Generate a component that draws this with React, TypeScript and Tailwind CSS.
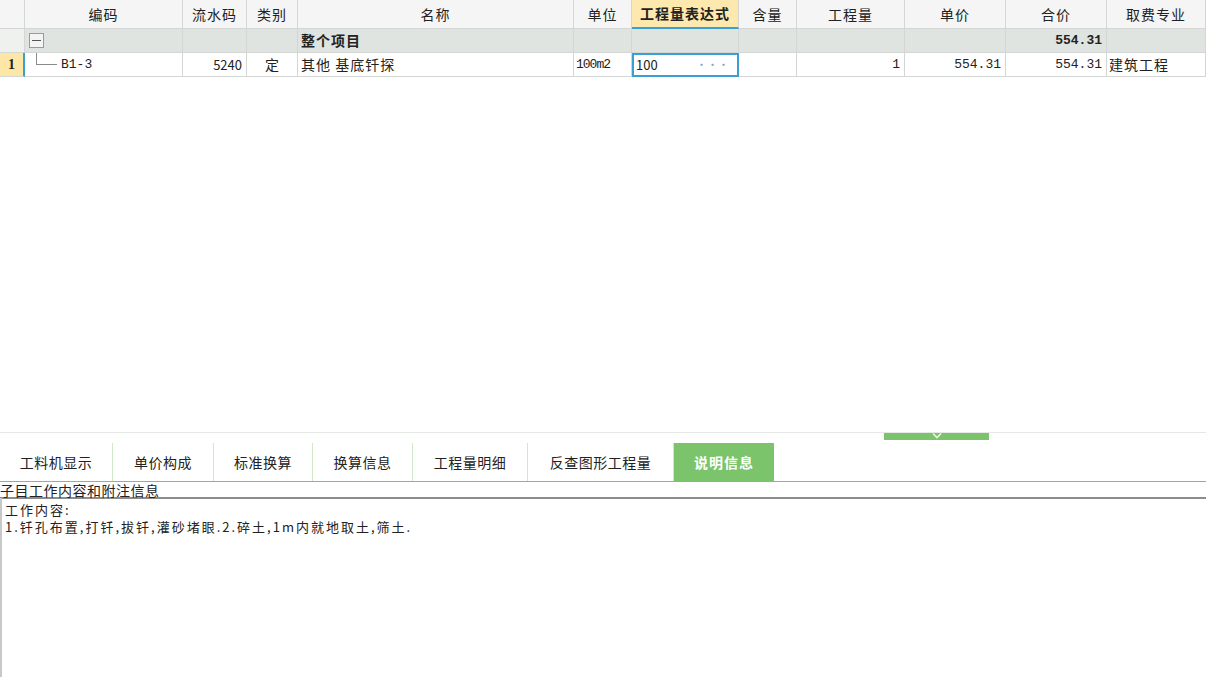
const cols = "grid grid-cols-[25px_158px_64px_51px_276px_58px_107px_58px_108px_101px_101px_99px]";
const cjk = "font-['Noto_Sans_CJK_SC',sans-serif]";
const mono = "font-['Liberation_Mono','Noto_Sans_CJK_SC',monospace]";
const cell = "border-r border-b border-[#d3d6d4] flex items-center overflow-hidden whitespace-nowrap";

const headers = ["编码", "流水码", "类别", "名称", "单位", "工程量表达式", "含量", "工程量", "单价", "合价", "取费专业"];

const tabs = ["工料机显示", "单价构成", "标准换算", "换算信息", "工程量明细", "反查图形工程量", "说明信息"];
const tabWidths = ["w-[113px]", "w-[101px]", "w-[99px]", "w-[100px]", "w-[115px]", "w-[146px]", "w-[100px]"];

const App = () => {
  return (
    <div className={`w-[1206px] h-[677px] bg-white flex flex-col overflow-hidden text-[#222] ${cjk}`}>
      {/* grid */}
      <div className="h-[432px] shrink-0">
        <div className={`${cols} h-[29px] bg-[#f4f5f4] text-[14px] tracking-[1px]`}>
          <div className={cell} />
          {headers.map((h, i) =>
            i === 5 ? (
              <div
                key={h}
                className="border-r border-[#d3d6d4] border-b-2 border-b-[#3a9fd3] bg-[#fde9ae] flex items-center justify-center font-bold"
              >
                {h}
              </div>
            ) : (
              <div key={h} className={`${cell} justify-center`}>
                {h}
              </div>
            )
          )}
        </div>

        <div className={`${cols} h-[24px] bg-[#dfe4e0] text-[14px]`}>
          <div className={`${cell} bg-[#eff1ef]`} />
          <div className={`${cell} pl-[4px]`}>
            <span className="w-[15px] h-[15px] border border-[#9a9a9a] bg-[#f4f4f4] flex items-center justify-center">
              <span className="w-[9px] h-[1px] bg-[#555]" />
            </span>
          </div>
          <div className={cell} />
          <div className={cell} />
          <div className={`${cell} pl-[3px] font-bold tracking-[1px]`}>整个项目</div>
          <div className={cell} />
          <div className={cell} />
          <div className={cell} />
          <div className={cell} />
          <div className={cell} />
          <div className={`${cell} justify-end pr-[4px] font-bold ${mono} text-[13px]`}>554.31</div>
          <div className={cell} />
        </div>

        <div className={`${cols} h-[23px] text-[14px]`}>
          <div className="border-b border-[#d3d6d4] border-r-2 border-r-[#3a9fd3] bg-[#fde7a6] flex items-center justify-center font-bold font-['Liberation_Serif',serif] text-[14px]">
            1
          </div>
          <div className={`${cell} relative`}>
            <span className="absolute left-[11px] top-[-6px] w-[1px] h-[17px] bg-[#8a8a8a]" />
            <span className="absolute left-[11px] top-[11px] w-[21px] h-[1px] bg-[#8a8a8a]" />
            <span className={`pl-[36px] ${mono} text-[13px]`}>B1-3</span>
          </div>
          <div className={`${cell} justify-end pr-[4px] text-[13px]`}>5240</div>
          <div className={`${cell} justify-center`}>定</div>
          <div className={`${cell} pl-[3px] tracking-[1px]`}>其他 基底钎探</div>
          <div className={`${cell} pl-[2px] ${mono} text-[13px] tracking-[-1px]`}>100m2</div>
          <div className="border-2 border-[#3a9fd3] flex items-center justify-between px-[2px] text-[13px]">
            <span>100</span>
            <span className="text-[#7aa6c2] pr-[6px] text-[11px] leading-none">···</span>
          </div>
          <div className={cell} />
          <div className={`${cell} justify-end pr-[4px] ${mono} text-[13px]`}>1</div>
          <div className={`${cell} justify-end pr-[4px] ${mono} text-[13px]`}>554.31</div>
          <div className={`${cell} justify-end pr-[4px] ${mono} text-[13px]`}>554.31</div>
          <div className={`${cell} pl-[2px] tracking-[1px]`}>建筑工程</div>
        </div>
      </div>

      {/* splitter */}
      <div className="h-[11px] shrink-0 border-t border-[#e6e8e6] relative">
        <div className="absolute left-[884px] top-0 w-[105px] h-[7px] bg-[#7cc46b] flex justify-center">
          <svg width="12" height="6" viewBox="0 0 12 6" className="mt-[0px]">
            <path d="M2 0.5 L6 4.5 L10 0.5" fill="none" stroke="#e8f5e4" strokeWidth="1.6" />
          </svg>
        </div>
      </div>

      {/* tabs */}
      <div className="h-[39px] shrink-0 flex border-b border-[#7cc46b] text-[14px]">
        {tabs.map((t, i) => (
          <div
            key={t}
            className={`${tabWidths[i]} flex items-center justify-center ${
              i === 6
                ? "bg-[#7cc46b] text-white font-bold tracking-[1px]"
                : "border-r border-[#cfe8c8] tracking-[0.5px]"
            }`}
          >
            {t}
          </div>
        ))}
      </div>

      <div className="h-[17px] shrink-0 text-[14px] leading-[17px] tracking-[0.5px] border-b-2 border-[#8c8c8c] -mb-[1px]">
        子目工作内容和附注信息
      </div>

      <div className="flex-1 border-l-2 border-[#c8c8c8] pl-[3px] pt-[3px] text-[13px] leading-[17px] tracking-[2px]">
        <div>工作内容:</div>
        <div>1.钎孔布置,打钎,拔钎,灌砂堵眼.2.碎土,1m内就地取土,筛土.</div>
      </div>
    </div>
  );
};

export default App;
